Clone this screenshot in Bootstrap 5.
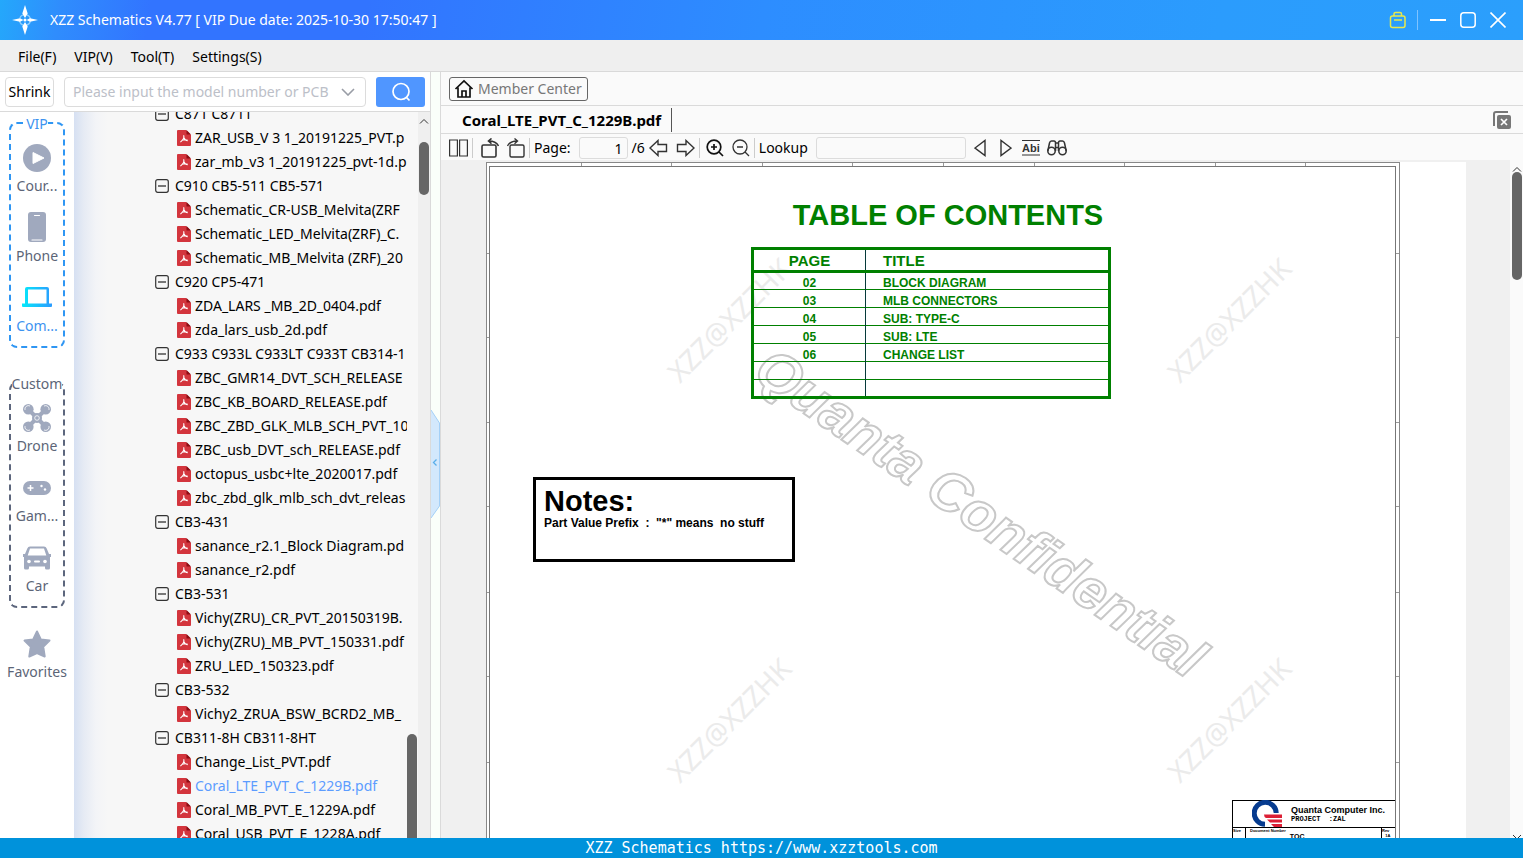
<!DOCTYPE html>
<html lang="en">
<head>
<meta charset="utf-8">
<meta name="viewport" content="width=device-width, initial-scale=1">
<title>XZZ Schematics</title>
<link href="https://cdn.jsdelivr.net/npm/bootstrap@5.3.0/dist/css/bootstrap.min.css" rel="stylesheet">
<style>
body{font-family:"Noto Sans","Noto Sans CJK SC",sans-serif;font-size:14px;line-height:20px;color:#000;background:#fafafa}
a{color:inherit;text-decoration:none}
svg{display:block;flex:none}
button{color:inherit}
.plain-btn{background:none;border:0;padding:0}
.titlebar{height:40px;color:#fff;padding:0 17px 0 12px;background:linear-gradient(100deg,#24a8fb 0,#2f8dfd 60px,#3274ff 150px,#3274ff 24%,#2d8dff 50%,#2b9cfd 80%,#2b9ffc 100%)}
.title-tools{gap:14px}
.title-sep{width:1px;height:20px;background:#7fc3ff;margin:0 -2px 0 -4px}
.menubar{height:32px;padding:2px 18px 0;gap:18px;background:#efefef;border-bottom:1px solid #d9d9d9}
.left-pane{width:431px;border-right:1px solid #dadada;background:#f7f7f7}
.splitter{width:10px;background:#fafffa;border-right:1px solid #dadada}
.search-row{height:40px;gap:10px;padding:0 5px;background:#fff;border-bottom:1px solid #dadada}
.shrink-btn{width:49px;height:30px;border:1px solid #dcdcdc;border-radius:4px;background:#fff}
.combo{width:302px;height:30px;border:1px solid #dcdcdc;border-radius:4px}
.combo input{border:0;outline:0;width:264px;padding:0;background:none}
.combo input::placeholder{color:#bcc0c8;opacity:1}
.search-btn{width:49px;height:30px;border-radius:3px;background:#5096ff;color:#fff}
.side{width:74px;padding-top:10px;background:#fff;color:#5c6577}
.side .group-box{width:56px;height:226px;border:2px dashed #5c667d;border-radius:8px}
.side .group-box.vip{border-color:#2f96f3;margin-bottom:34px}
.side .legend-text{background:#fff;line-height:18px;margin:-9px 0 -7px}
.side .entry{height:70px;width:74px;line-height:20px}
.blue-text{color:#3d93f0}
.tree-area{background:linear-gradient(90deg,#d6e0f2 0,#e6ebf4 10px,#f3f4f7 22px,#f7f7f7 34px)}
.tree{width:333px;margin-top:-10px;padding-left:81px;white-space:nowrap;overflow:hidden}
.tree li>a,.tree .branch{height:24px;display:flex;align-items:center}
.tree .branch{gap:6px}
.tree li li a{padding-left:22px;gap:4px}
.tree a.current{color:#5c9cff}
.inner-scroll{width:11px}
.inner-scroll .thumb{margin:622px 0 -10px;height:125px}
.outer-scroll{width:12px;padding-top:6px;gap:18px;background:#efefef}
.outer-scroll .thumb{height:53px}
.thumb{width:10px;border-radius:5px;background:#666}
.grip{top:337px;left:0}
.member-row{height:34px;border-bottom:1px solid #dadada}
.member-btn{width:139px;height:24px;border:1px solid #666;border-radius:3px;color:#777;background:#fafafa}
.tab-row{height:28px;border-bottom:1px solid #dadada}
.doc-tab{height:24px;border-right:1px solid #555;padding:0 10px 0 21px;font-size:15px;font-weight:700;line-height:20px}
.tool-row{height:26px;padding:2px 8px 0;color:#333}
.tool-row label,.tool-row .ink{color:#000}
.tool-row input{height:22px;border:1px solid #dcdcdc;border-radius:3px;background:#fafafa}
.page-field{width:49px}
.find-field{width:150px}
.bar-sep{width:1px;height:20px;background:#ccc}
.zoom-tools{gap:8px;padding:0 4px 0 6px}
.find-tools{gap:14px}
.match-tools{gap:7px;padding-left:10px}
.viewer{background:#f0f0f0}
.paper{background:#fff;margin:2px 44px 0 45px;font-family:"Liberation Sans",Arial,sans-serif;font-weight:700}
.frame{width:914px;height:1200px;border:1px solid #888;padding:3px 3px 3px 2px}
.frame-in{border:1px solid #777}
.toc{margin:33px 0 0 261px;width:360px;color:#008000}
.toc h1{font-size:29px;line-height:30px;font-weight:700;padding-left:34px;margin:0 0 17px;text-align:center}
.toc table{width:360px;border:3px solid #008000;border-collapse:collapse;font-size:12px;line-height:12px}
.toc th{font-size:15px;height:23px;border-bottom:3px solid #008000;padding:2px 0 0 17px}
.toc tbody tr{border-bottom:1px solid #008000}
.toc td{height:18px;padding:4px 0 0 17px}
.toc th:first-child,.toc td:first-child{width:113px;padding-left:0;text-align:center;border-right:1px solid #063a3a}
.notes{margin:78px 0 0 43px;width:262px;height:85px;border:3px solid #000;padding:6px 8px;color:#000;font-size:12px;line-height:14px;white-space:pre}
.notes h2{font-size:29px;line-height:30px;font-weight:700;margin:0}
.title-block{width:163px;margin-top:238px;border:1px solid #000;border-right:0;color:#000;line-height:10px}
.tb-top{height:27px;padding-left:19px;border-bottom:1px solid #000}
.tb-company{font-size:9px}
.tb-project{font:700 7px/9px "Liberation Mono",monospace}
.tiny{font-size:4px;line-height:5px}
.tb-size{width:13px;height:40px;border-right:1px solid #000}
.tb-name{font-size:7px;line-height:10px}
.tb-rev{width:14px;border-left:1px solid #000}
.overlay{left:0;top:0;pointer-events:none}
.view-scroll{width:13px;padding-top:6px;background:#fafafa}
.view-scroll .thumb{height:108px}
.foot{height:20px;background:#0092db;color:#fff;font:15px/20px "DejaVu Sans Mono",monospace}
</style>
</head>
<body class="vh-100 overflow-hidden d-flex flex-column">
<svg width="0" height="0" class="position-absolute" aria-hidden="true">
<symbol id="pdf" viewBox="0 0 14 16"><path fill="#d3353d" d="M1 0h8l5 5v10a1 1 0 0 1-1 1H1a1 1 0 0 1-1-1V1a1 1 0 0 1 1-1z"/><path fill="#8e0d14" d="M9.500 0L14 4.500H9.500z"/><path fill="none" stroke="#fff" stroke-width="1.100" d="M6.600 5.200c.9 2-.9 5-3.200 7M6.800 7.500c.6 2 2 3 4 3.200M5 10.300c1.500-.6 3-.8 5.500-.3"/></symbol>
<symbol id="minus" viewBox="0 0 14 14"><rect x=".7" y=".7" width="12.600" height="12.600" rx="2" fill="#f7f7f7" stroke="#333" stroke-width="1.200"/><path stroke="#222" stroke-width="1.200" d="M3 7h8"/></symbol>
</svg>

<header class="titlebar d-flex align-items-center flex-shrink-0">
<svg width="26" height="30" viewBox="0 0 26 30"><circle cx="13" cy="15" r="5.500" fill="none" stroke="#8fd0ff" stroke-width="1.200" stroke-dasharray="6 2.640" stroke-dashoffset="-1.300"/><path fill="#fff" d="M13 0l2.700 8.500L13 13l-2.700-4.500zM13 30l2.700-8.500L13 17l-2.700 4.500zM0 15l8-1.700L11.500 15 8 16.700zM26 15l-8-1.700L14.500 15l3.500 1.700z"/><circle cx="13" cy="15" r="1.500" fill="#fff"/></svg>
<span class="flex-grow-1 ms-2 ps-1">XZZ Schematics V4.77 [ VIP Due date: 2025-10-30 17:50:47 ]</span>
<div class="title-tools d-flex align-items-center">
<button class="plain-btn" aria-label="License"><svg width="18" height="18" viewBox="0 0 18 18" fill="none" stroke="#e9e94b" stroke-width="1.500"><rect x="1.500" y="5" width="14.500" height="11.500" rx="2"/><path d="M5 5V3q0-1.500 1.500-1.500h4.500Q12.500 1.500 12.500 3v2M5 9h8"/></svg></button>
<span class="title-sep"></span>
<button class="plain-btn" aria-label="Minimize"><svg width="16" height="16" viewBox="0 0 16 16"><path stroke="#fff" stroke-width="2" d="M0 8h16"/></svg></button>
<button class="plain-btn" aria-label="Maximize"><svg width="16" height="16" viewBox="0 0 16 16"><rect x=".8" y=".8" width="14.400" height="14.400" rx="3" fill="none" stroke="#fff" stroke-width="1.500"/></svg></button>
<button class="plain-btn" aria-label="Close"><svg width="16" height="16" viewBox="0 0 16 16"><path stroke="#fff" stroke-width="1.600" d="M.5.5l15 15M15.500.5l-15 15"/></svg></button>
</div>
</header>

<nav class="menubar d-flex align-items-center flex-shrink-0">
<a href="#">File(F)</a><a href="#">VIP(V)</a><a href="#">Tool(T)</a><a href="#">Settings(S)</a>
</nav>

<main class="d-flex flex-grow-1 overflow-hidden">
<section class="left-pane d-flex flex-column flex-shrink-0 overflow-hidden">
<form class="search-row d-flex align-items-center flex-shrink-0">
<button type="button" class="shrink-btn p-0">Shrink</button>
<div class="combo d-flex align-items-center ps-2">
<input type="text" aria-label="Model number or PCB" placeholder="Please input the model number or PCB">
<svg width="14" height="8" viewBox="0 0 14 8" class="ms-1"><path fill="none" stroke="#999da6" stroke-width="1.600" d="M1 1l6 6 6-6"/></svg>
</div>
<button type="button" class="plain-btn search-btn d-flex align-items-center justify-content-center" aria-label="Search"><svg width="20" height="20" viewBox="0 0 20 20" fill="none" stroke="#fff" stroke-width="1.700"><circle cx="10" cy="9.500" r="8"/><path d="M15 15l3.500 3.500"/></svg></button>
</form>
<div class="d-flex flex-grow-1 overflow-hidden">
<aside class="side d-flex flex-column align-items-center flex-shrink-0">
<div class="group-box vip d-flex flex-column align-items-center flex-shrink-0">
<span class="legend-text blue-text">VIP</span>
<a href="#" class="entry d-flex flex-column align-items-center justify-content-end"><svg width="28" height="28" viewBox="0 0 28 28" class="mb-1"><circle cx="14" cy="14" r="14" fill="#a0a9be"/><path fill="#fff" stroke="#fff" stroke-linejoin="round" d="M10 8.500v11L21 14z"/></svg>Cour...</a>
<a href="#" class="entry d-flex flex-column align-items-center justify-content-end"><svg width="18" height="30" viewBox="0 0 18 30" class="mb-1"><rect width="18" height="30" rx="3" fill="#a0a9be"/><path stroke="#fff" stroke-linecap="round" stroke-width="1.200" d="M6.500 3.500h5M4 28h10"/></svg>Phone</a>
<a href="#" class="entry blue-text d-flex flex-column align-items-center justify-content-end"><svg width="30" height="30" viewBox="0 0 30 30" class="mb-1"><defs><linearGradient id="lap"><stop stop-color="#05e9fa"/><stop offset="1" stop-color="#2b9bff"/></linearGradient></defs><path fill="url(#lap)" fill-rule="evenodd" d="M3 7q0-2 2-2h20q2 0 2 2v14.500h3V24q0 1-1 1H1q-1 0-1-1v-2.500h3zm3 .5v14h18.500v-14z"/></svg>Com...</a>
</div>
<div class="group-box d-flex flex-column align-items-center flex-shrink-0">
<span class="legend-text">Custom</span>
<a href="#" class="entry d-flex flex-column align-items-center justify-content-end"><svg width="28" height="28" viewBox="0 0 28 28" class="mb-1"><path stroke="#a0a9be" stroke-width="4" d="M5 5l18 18M23 5L5 23"/><g fill="#a0a9be"><circle cx="5.300" cy="5.300" r="5.300"/><circle cx="22.700" cy="5.300" r="5.300"/><circle cx="5.300" cy="22.700" r="5.300"/><circle cx="22.700" cy="22.700" r="5.300"/><circle cx="14" cy="14" r="5"/></g><g fill="none" stroke="#fff" stroke-width=".8"><circle cx="14" cy="14" r="2.300"/><path d="M2 6a3.500 3.500 0 0 1 5-4M21 2a3.500 3.500 0 0 1 5 4M2 22a3.500 3.500 0 0 0 5 4M21 26a3.500 3.500 0 0 0 5-4"/></g></svg>Drone</a>
<a href="#" class="entry d-flex flex-column align-items-center justify-content-end"><svg width="28" height="28" viewBox="0 0 28 28" class="mb-1"><rect y="7" width="28" height="14" rx="7" fill="#a0a9be"/><path stroke="#fff" stroke-width="1.500" d="M4.500 14h6M7.500 11v6"/><circle cx="18.500" cy="12" r="1.200" fill="#fff"/><circle cx="22" cy="15.500" r="1.200" fill="#fff"/></svg>Gam...</a>
<a href="#" class="entry d-flex flex-column align-items-center justify-content-end"><svg width="28" height="28" viewBox="0 0 28 28" class="mb-1"><path fill="#a0a9be" fill-rule="evenodd" d="M7 2.500h14q2 0 2.700 2L26 10h2v3h-1v11q0 1.500-1.500 1.500h-2Q22 25.500 22 24v-1.500H6V24q0 1.500-1.500 1.500h-2Q1 25.500 1 24V13H0v-3h2l2.300-5.500q.7-2 2.700-2zm0 2L4.700 11.500h18.600L21 4.500z"/><circle cx="6" cy="17.500" r="1.800" fill="#fff"/><circle cx="22" cy="17.500" r="1.800" fill="#fff"/><path stroke="#fff" stroke-width="2" stroke-linecap="round" d="M12 17.500h4"/></svg>Car</a>
</div>
<a href="#" class="entry d-flex flex-column align-items-center justify-content-end mt-1"><svg width="28" height="28" viewBox="0 0 28 28" class="mb-1"><path fill="#a0a9be" stroke="#a0a9be" stroke-width="2" stroke-linejoin="round" d="M14 1.500l3.800 7.900 8.700 1.200-6.300 6.100 1.500 9.800-7.700-3.400-7.700 3.400 1.500-9.800-6.300-6.100 8.700-1.200z"/></svg>Favorites</a>
</aside>
<div class="tree-area d-flex flex-grow-1 overflow-hidden">
<ul class="tree list-unstyled mb-0 flex-shrink-0">
<li><button class="plain-btn branch"><svg width="14" height="14"><use href="#minus"/></svg>C871 C871T</button><ul class="list-unstyled">
<li><a href="#"><svg width="14" height="16"><use href="#pdf"/></svg>ZAR_USB_V 3 1_20191225_PVT.p</a></li>
<li><a href="#"><svg width="14" height="16"><use href="#pdf"/></svg>zar_mb_v3 1_20191225_pvt-1d.p</a></li></ul></li>
<li><button class="plain-btn branch"><svg width="14" height="14"><use href="#minus"/></svg>C910 CB5-511 CB5-571</button><ul class="list-unstyled">
<li><a href="#"><svg width="14" height="16"><use href="#pdf"/></svg>Schematic_CR-USB_Melvita(ZRF</a></li>
<li><a href="#"><svg width="14" height="16"><use href="#pdf"/></svg>Schematic_LED_Melvita(ZRF)_C.</a></li>
<li><a href="#"><svg width="14" height="16"><use href="#pdf"/></svg>Schematic_MB_Melvita (ZRF)_20</a></li></ul></li>
<li><button class="plain-btn branch"><svg width="14" height="14"><use href="#minus"/></svg>C920 CP5-471</button><ul class="list-unstyled">
<li><a href="#"><svg width="14" height="16"><use href="#pdf"/></svg>ZDA_LARS _MB_2D_0404.pdf</a></li>
<li><a href="#"><svg width="14" height="16"><use href="#pdf"/></svg>zda_lars_usb_2d.pdf</a></li></ul></li>
<li><button class="plain-btn branch"><svg width="14" height="14"><use href="#minus"/></svg>C933 C933L C933LT C933T CB314-1</button><ul class="list-unstyled">
<li><a href="#"><svg width="14" height="16"><use href="#pdf"/></svg>ZBC_GMR14_DVT_SCH_RELEASE</a></li>
<li><a href="#"><svg width="14" height="16"><use href="#pdf"/></svg>ZBC_KB_BOARD_RELEASE.pdf</a></li>
<li><a href="#"><svg width="14" height="16"><use href="#pdf"/></svg>ZBC_ZBD_GLK_MLB_SCH_PVT_10</a></li>
<li><a href="#"><svg width="14" height="16"><use href="#pdf"/></svg>ZBC_usb_DVT_sch_RELEASE.pdf</a></li>
<li><a href="#"><svg width="14" height="16"><use href="#pdf"/></svg>octopus_usbc+lte_2020017.pdf</a></li>
<li><a href="#"><svg width="14" height="16"><use href="#pdf"/></svg>zbc_zbd_glk_mlb_sch_dvt_releas</a></li></ul></li>
<li><button class="plain-btn branch"><svg width="14" height="14"><use href="#minus"/></svg>CB3-431</button><ul class="list-unstyled">
<li><a href="#"><svg width="14" height="16"><use href="#pdf"/></svg>sanance_r2.1_Block Diagram.pd</a></li>
<li><a href="#"><svg width="14" height="16"><use href="#pdf"/></svg>sanance_r2.pdf</a></li></ul></li>
<li><button class="plain-btn branch"><svg width="14" height="14"><use href="#minus"/></svg>CB3-531</button><ul class="list-unstyled">
<li><a href="#"><svg width="14" height="16"><use href="#pdf"/></svg>Vichy(ZRU)_CR_PVT_20150319B.</a></li>
<li><a href="#"><svg width="14" height="16"><use href="#pdf"/></svg>Vichy(ZRU)_MB_PVT_150331.pdf</a></li>
<li><a href="#"><svg width="14" height="16"><use href="#pdf"/></svg>ZRU_LED_150323.pdf</a></li></ul></li>
<li><button class="plain-btn branch"><svg width="14" height="14"><use href="#minus"/></svg>CB3-532</button><ul class="list-unstyled">
<li><a href="#"><svg width="14" height="16"><use href="#pdf"/></svg>Vichy2_ZRUA_BSW_BCRD2_MB_</a></li></ul></li>
<li><button class="plain-btn branch"><svg width="14" height="14"><use href="#minus"/></svg>CB311-8H CB311-8HT</button><ul class="list-unstyled">
<li><a href="#"><svg width="14" height="16"><use href="#pdf"/></svg>Change_List_PVT.pdf</a></li>
<li><a href="#" class="current"><svg width="14" height="16"><use href="#pdf"/></svg>Coral_LTE_PVT_C_1229B.pdf</a></li>
<li><a href="#"><svg width="14" height="16"><use href="#pdf"/></svg>Coral_MB_PVT_E_1229A.pdf</a></li>
<li><a href="#"><svg width="14" height="16"><use href="#pdf"/></svg>Coral_USB_PVT_E_1228A.pdf</a></li></ul></li>
</ul>
<div class="inner-scroll d-flex flex-column flex-shrink-0"><div class="thumb"></div></div>
<div class="outer-scroll flex-grow-1 d-flex flex-column align-items-center"><svg width="10" height="6" viewBox="0 0 10 6"><path fill="none" stroke="#333" d="M1 5.500l4-4 4 4"/></svg><div class="thumb"></div></div>
</div>
</div>
</section>
<div class="splitter position-relative flex-shrink-0">
<button class="plain-btn grip position-absolute" aria-label="Collapse list"><svg width="9" height="110" viewBox="0 0 9 110"><path fill="#d3e8fc" stroke="#a4d0f7" d="M0 1l8.500 13v83L0 109"/><path fill="none" stroke="#5aaeea" stroke-width="1.300" d="M5.500 50.500l-3 3 3 3"/></svg></button>
</div>
<section class="d-flex flex-column flex-grow-1 overflow-hidden">
<div class="member-row d-flex align-items-center flex-shrink-0 ps-2"><button class="member-btn d-flex align-items-center p-0 ps-1"><svg width="20" height="20" viewBox="0 0 20 20" fill="none" stroke="#111" stroke-width="1.700" class="me-1"><path d="M1.500 10L10 2l8.500 8M4 8.500V18h12V8.500M8 18v-6h4v6"/></svg>Member Center</button></div>
<div class="tab-row d-flex align-items-center flex-shrink-0"><a href="#" class="doc-tab d-flex align-items-center me-auto">Coral_LTE_PVT_C_1229B.pdf</a><button class="plain-btn me-2" aria-label="Close all tabs"><svg width="18" height="18" viewBox="0 0 18 18" class="me-1"><path fill="none" stroke="#777" stroke-width="2" d="M1 15V3q0-2 2-2h12"/><rect x="4" y="4" width="14" height="14" rx="2" fill="#777"/><path stroke="#fff" stroke-width="1.700" d="M8 8l6 6M14 8l-6 6"/></svg></button></div>
<div class="tool-row d-flex align-items-center flex-shrink-0">
<button class="plain-btn me-1" aria-label="Two pages"><svg width="19" height="18" viewBox="0 0 19 18" fill="none" stroke="#333" stroke-width="1.200"><path d="M.6 1h7.800v16H.6zM10.600 1h7.800v16h-7.800z"/></svg></button>
<span class="bar-sep me-2"></span>
<button class="plain-btn me-2" aria-label="Rotate left"><svg width="18" height="20" viewBox="0 0 18 20" fill="none" stroke="#333" stroke-width="1.600"><rect x="1" y="7" width="14" height="12" rx="1.500"/><path d="M17.500 8Q15 3 8 3M10.500.5L7.500 3l3 2.700"/></svg></button>
<button class="plain-btn me-1" aria-label="Rotate right"><svg width="18" height="20" viewBox="0 0 18 20" fill="none" stroke="#333" stroke-width="1.400"><rect x="3" y="7" width="14" height="12" rx="1.500"/><path d="M.5 8Q3 3 10 3M7.500.5l3 2.500-3 2.700"/></svg></button>
<span class="bar-sep me-1"></span>
<label for="pg">Page:</label>
<input id="pg" type="text" value="1" class="page-field text-end ink ms-2 pe-1 me-1"><span class="ink">/6</span>
<button class="plain-btn ms-1" aria-label="Previous page"><svg width="19" height="18" viewBox="0 0 19 18" fill="none" stroke="#333" stroke-width="1.400"><path d="M1 9l8-7.500v4h8.500v7H9v4z"/></svg></button>
<button class="plain-btn ms-2 me-1" aria-label="Next page"><svg width="19" height="18" viewBox="0 0 19 18" fill="none" stroke="#333" stroke-width="1.400"><path d="M18 9l-8-7.500v4H1.500v7H10v4z"/></svg></button>
<span class="bar-sep"></span>
<div class="zoom-tools d-flex">
<button class="plain-btn" aria-label="Zoom in"><svg width="18" height="18" viewBox="0 0 18 18" fill="none" stroke="#111" stroke-width="1.700"><circle cx="8" cy="8" r="6.800"/><path d="M13 13l4 4M5 8h6M8 5v6"/></svg></button>
<button class="plain-btn" aria-label="Zoom out"><svg width="18" height="18" viewBox="0 0 18 18" fill="none" stroke="#333" stroke-width="1.300"><circle cx="8" cy="8" r="7"/><path d="M13 13l4 4M5 8h6"/></svg></button>
</div>
<span class="bar-sep me-1"></span>
<label for="lk">Lookup</label>
<input id="lk" type="text" class="find-field ms-2 me-2">
<div class="find-tools d-flex">
<button class="plain-btn" aria-label="Find previous"><svg width="12" height="18" viewBox="0 0 12 18" fill="none" stroke="#333" stroke-width="1.400"><path d="M11 1.500v15L1 9z"/></svg></button>
<button class="plain-btn" aria-label="Find next"><svg width="12" height="18" viewBox="0 0 12 18" fill="none" stroke="#333" stroke-width="1.400"><path d="M1 1.500v15L11 9z"/></svg></button>
</div>
<div class="match-tools d-flex align-items-center">
<button class="plain-btn" aria-label="Match word"><svg width="18" height="16" viewBox="0 0 18 16"><path stroke="#333" d="M0 .5h18M0 15h18"/><text x="0" y="12" font-family="Liberation Sans" font-size="11" font-weight="700" fill="#333">Abi</text></svg></button>
<button class="plain-btn" aria-label="Find"><svg width="20" height="16" viewBox="0 0 20 16" fill="none" stroke="#333" stroke-width="1.500"><circle cx="4.500" cy="11" r="3.700"/><circle cx="15.500" cy="11" r="3.700"/><path d="M.8 11L2.500 3q.5-2 2-2H7q1.500 0 1.500 2v8M19.200 11L17.500 3q-.5-2-2-2H13q-1.500 0-1.500 2v8M8.500 3h3M8.500 7.500h3"/></svg></button>
</div>
</div>
<div class="viewer d-flex flex-grow-1 overflow-hidden">
<article class="paper flex-grow-1">
<div class="frame position-relative">
<svg class="overlay position-absolute" width="912" height="680" viewBox="0 0 912 680">
<path stroke="#999" d="M94.500 0v3M184.500 0v3M275.500 0v3M365.500 0v3M456.500 0v3M547.500 0v3M637.500 0v3M728.500 0v3M818.500 0v3M0 90.500h3M0 174.500h3M0 259.500h3M0 343.500h3M0 429.500h3M0 513.500h3M0 599.500h3M909 90.500h3M909 174.500h3M909 259.500h3M909 343.500h3M909 429.500h3M909 513.500h3M909 599.500h3"/>
<g font-family="Noto Sans" font-weight="400" font-size="28" fill="#ebebeb"><text transform="translate(193 221) rotate(-45)">XZZ@XZZHK</text><text transform="translate(693 221) rotate(-45)">XZZ@XZZHK</text><text transform="translate(193 621) rotate(-45)">XZZ@XZZHK</text><text transform="translate(693 621) rotate(-45)">XZZ@XZZHK</text></g>
<text transform="translate(264 214) rotate(34.700)" font-family="Liberation Sans" font-weight="700" font-style="italic" font-size="56" fill="none" stroke="#c8c8c8" stroke-width="2">Quanta Confidential</text>
</svg>
<div class="frame-in h-100 d-flow-root position-relative overflow-hidden">
<div class="toc">
<h1>TABLE OF CONTENTS</h1>
<table>
<thead><tr><th>PAGE</th><th>TITLE</th></tr></thead>
<tbody>
<tr><td>02</td><td>BLOCK DIAGRAM</td></tr>
<tr><td>03</td><td>MLB CONNECTORS</td></tr>
<tr><td>04</td><td>SUB: TYPE-C</td></tr>
<tr><td>05</td><td>SUB: LTE</td></tr>
<tr><td>06</td><td>CHANGE LIST</td></tr>
<tr><td></td><td></td></tr>
<tr><td></td><td></td></tr>
</tbody>
</table>
</div>
<div class="notes"><h2>Notes:</h2>Part Value Prefix  :  "*" means  no stuff</div>
<div class="title-block ms-auto">
<div class="tb-top d-flex align-items-center">
<svg width="31" height="28" viewBox="0 0 31 28"><path fill="none" stroke="#063b8f" stroke-width="5" d="M13 24.300A11 11 0 1 1 24.200 13"/><path fill="#dc1f35" d="M12 14.500h18V18H14q-2-1-2-3.500zM15 19.500h15v3H18zM19 24h11v3h-8z"/></svg>
<div class="ms-2"><div class="tb-company text-nowrap">Quanta Computer Inc.</div><div class="tb-project">PROJECT&nbsp; :ZAL</div></div>
</div>
<div class="d-flex tiny"><span class="tb-size">Size</span><span class="ms-1">Document Number</span><span class="tb-name ms-1 pt-1">TOC</span><span class="tb-rev ms-auto">Rev<br>&nbsp; &nbsp;1A</span></div>
</div>
</div>
</div>
</article>
<div class="view-scroll d-flex flex-column align-items-center flex-shrink-0 overflow-hidden"><svg width="10" height="6" viewBox="0 0 10 6"><path fill="none" stroke="#333" d="M1 5.500l4-4 4 4"/></svg><div class="thumb flex-shrink-0"></div><svg width="10" height="6" viewBox="0 0 10 6" class="mt-auto"><path fill="none" stroke="#333" d="M1 3l4 4 4-4"/></svg></div>
</div>
</section>
</main>
<footer class="foot text-center flex-shrink-0">XZZ Schematics https://www.xzztools.com</footer>
<script src="https://cdn.jsdelivr.net/npm/bootstrap@5.3.0/dist/js/bootstrap.bundle.min.js"></script>
</body>
</html>
